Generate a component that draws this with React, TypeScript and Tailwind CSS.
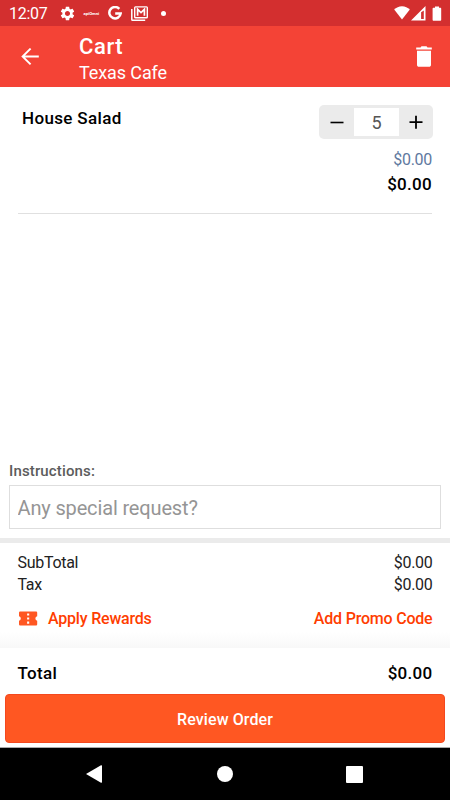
import type { ReactNode } from 'react';

interface RowProps {
  label: string;
  value: string;
}

function Icon({ className, children }: { className: string; children: ReactNode }) {
  return (
    <svg viewBox="0 0 24 24" fill="currentColor" className={`shrink-0 ${className}`}>
      {children}
    </svg>
  );
}

function SummaryRow({ label, value }: RowProps) {
  return (
    <div className="flex justify-between text-[16px] leading-[21.5px] tracking-[-0.3px] text-[#222]">
      <span>{label}</span>
      <span>{value}</span>
    </div>
  );
}

function StatusBar() {
  return (
    <div className="flex h-[26px] items-center bg-[#d32f2f] pl-[9px] pr-[8px] text-white">
      <span className="w-[49.5px] pt-[2px] text-[16px] leading-[24px] tracking-[-0.3px]">12:07</span>
      <Icon className="h-[17px] w-[17px]">
        <path d="M19.14 12.94c.04-.3.06-.61.06-.94 0-.32-.02-.64-.07-.94l2.03-1.58c.18-.14.23-.41.12-.61l-1.92-3.32c-.12-.22-.37-.29-.59-.22l-2.39.96c-.5-.38-1.03-.7-1.62-.94l-.36-2.54c-.04-.24-.24-.41-.48-.41h-3.84c-.24 0-.43.17-.47.41l-.36 2.54c-.59.24-1.13.57-1.62.94l-2.39-.96c-.22-.08-.47 0-.59.22L2.74 8.87c-.12.21-.08.47.12.61l2.03 1.58c-.05.3-.09.63-.09.94s.02.64.07.94l-2.03 1.58c-.18.14-.23.41-.12.61l1.92 3.32c.12.22.37.29.59.22l2.39-.96c.5.38 1.03.7 1.62.94l.36 2.54c.05.24.24.41.48.41h3.84c.24 0 .44-.17.47-.41l.36-2.54c.59-.24 1.13-.56 1.62-.94l2.39.96c.22.08.47 0 .59-.22l1.92-3.32c.12-.22.07-.47-.12-.61l-2.01-1.58zM12 15.6c-1.98 0-3.6-1.62-3.6-3.6s1.62-3.6 3.6-3.6 3.6 1.62 3.6 3.6-1.62 3.6-3.6 3.6z" />
      </Icon>
      <span className="ml-[8px] w-[16px] text-[4.2px] font-bold leading-[5px]">apiOmni</span>
      <svg viewBox="0 0 14 14" className="ml-[8.5px] h-[14px] w-[14px] shrink-0" fill="none" stroke="currentColor" strokeWidth="2.5">
        <path d="M11.3 2.9A5.7 5.7 0 1 0 12.7 7.4H7.2" />
      </svg>
      <svg viewBox="0 0 17 15" className="ml-[8.5px] h-[15px] w-[17px] shrink-0" fill="none" stroke="currentColor">
        <path d="M.8 3v10.4c0 .5.3.8.8.8h12.600" strokeWidth="1.5" />
        <rect x="3.7" y=".9" width="12.600" height="10.900" rx=".8" strokeWidth="1.4" />
        <path d="M6.600 9.800V3.300L10 6.500l3.400-3.200v6.500" strokeWidth="1.700" />
      </svg>
      <span className="ml-[13.5px] h-[5px] w-[5px] rounded-full bg-white" />
      <div className="ml-auto flex items-center">
        <svg viewBox="0 0 16 14" className="h-[14px] w-[16px]" fill="currentColor">
          <path d="M8 13.600.2 3.600C2.200 1.600 4.900.3 8 .3s5.800 1.300 7.800 3.300z" />
        </svg>
        <svg viewBox="0 0 15 15" className="ml-[1px] h-[15px] w-[15px]" fill="currentColor">
          <path fillRule="evenodd" d="M0 14.500 14.500 0v14.500zM10.100 6.200v6.900h2.700V4.600z" />
        </svg>
        <svg viewBox="0 0 10 15" className="ml-[6px] h-[15px] w-[10px]" fill="currentColor">
          <path d="M3 .4h4v1.300h1.200c.6 0 1 .4 1 1v11c0 .6-.4 1-1 1H1.600c-.6 0-1-.4-1-1v-11c0-.6.4-1 1-1H3z" />
        </svg>
      </div>
    </div>
  );
}

function Header() {
  return (
    <div className="flex h-[61px] bg-[#f44336] text-white">
      <svg viewBox="0 0 18 18" className="ml-[21px] mt-[22px] h-[18px] w-[18px] shrink-0" fill="none" stroke="currentColor" strokeWidth="1.9">
        <path d="M17.800 8.500H1.500M9.600.600 1.600 8.500l8 7.900" />
      </svg>
      <div className="ml-[40px] flex flex-col pt-[8px]">
        <span className="text-[22px] font-medium leading-[26px] tracking-[0.600px]">Cart</span>
        <span className="text-[18px] leading-[25px] tracking-[-0.1px]">Texas Cafe</span>
      </div>
      <svg viewBox="0 0 16 21" className="ml-auto mr-[18px] mt-[20px] h-[21px] w-[16px]" fill="currentColor">
        <path d="M.2 1.400h4.300L5.500.3h5l1 1.100h4.300v2.200H.2zM1 4.700h14v14c0 1.300-.8 2.100-2 2.100H3c-1.200 0-2-.8-2-2.100z" />
      </svg>
    </div>
  );
}

function CartItem() {
  return (
    <div className="mx-[18px] flex h-[127px] justify-between border-b border-[#e0e0e0] pt-[18px]">
      <span className="pl-[4px] text-[17px] font-medium leading-[26px] tracking-[0.35px] text-black">House Salad</span>
      <div className="flex flex-col items-end">
        <div className="-mr-px flex h-[34px] w-[114px] items-center rounded-[5px] bg-[#ebebeb] text-black">
          <button className="flex h-full w-[35px] items-center justify-center" aria-label="Decrease">
            <svg viewBox="0 0 14 14" className="h-[14px] w-[14px]" stroke="currentColor" strokeWidth="1.6">
              <path d="M.5 7.500h13" />
            </svg>
          </button>
          <span className="h-[28px] w-[45px] bg-white pt-[1px] text-center text-[18px] leading-[28px] text-[#555]">5</span>
          <button className="flex h-full w-[34px] items-center justify-center" aria-label="Increase">
            <svg viewBox="0 0 14 14" className="h-[14px] w-[14px]" stroke="currentColor" strokeWidth="1.8">
              <path d="M.5 7.200h13M7 .7v13" />
            </svg>
          </button>
        </div>
        <span className="mt-[9px] text-[16px] leading-[24px] tracking-[-0.3px] text-[#6079a0]">$0.00</span>
        <span className="text-[17px] font-medium leading-[25px] tracking-[0.3px] text-black">$0.00</span>
      </div>
    </div>
  );
}

export default function App() {
  return (
    <div className="flex h-[800px] w-[450px] flex-col overflow-hidden bg-white font-['Roboto',sans-serif]">
      <StatusBar />
      <Header />
      <CartItem />

      {/* Special instructions */}
      <div className="mt-auto px-[9px] pb-[9px]">
        <div className="text-[15px] font-medium leading-[24px] tracking-[0.15px] text-[#5c5c5c]">Instructions:</div>
        <input
          className="mt-[2px] block h-[44px] w-full border border-[#dedede] px-[7.5px] pt-[2px] text-[20px] tracking-[-0.15px] placeholder:text-[#959595]"
          placeholder="Any special request?"
        />
      </div>

      {/* Order summary */}
      <div className="h-[110px] shrink-0 border-t-[5px] border-[#ebebeb] bg-linear-to-b from-white from-85% to-[#f8f8f8] px-[17.5px] pt-[9px]">
        <SummaryRow label="SubTotal" value="$0.00" />
        <SummaryRow label="Tax" value="$0.00" />
        <div className="mt-[12px] flex items-center text-[16px] font-medium leading-[24px] tracking-[-0.2px] text-[#ff3d00]">
          <svg viewBox="0 0 20 16" className="mr-[10.5px] h-[16px] w-[20px]" fill="#ff5722">
            <path
              fillRule="evenodd"
              d="M2.500.4h15.200c1 0 1.500.5 1.500 1.300v3.500a2.300 2.300 0 0 0 0 4.500v3.600c0 .8-.5 1.300-1.500 1.300H2.500c-1 0-1.500-.5-1.500-1.300V9.700a2.300 2.300 0 0 0 0-4.500V1.700C1 .9 1.500.4 2.500.4zM9.100 2.400v2.100h2.100V2.400zM9.100 6.500v2.100h2.100V6.500zM9.100 10.600v2.100h2.100v-2.100z"
            />
          </svg>
          <span>Apply Rewards</span>
          <span className="ml-auto">Add Promo Code</span>
        </div>
      </div>

      {/* Total */}
      <div className="flex h-[46px] shrink-0 justify-between px-[17.5px] pt-[12px] text-[17px] font-medium leading-[26px] tracking-[0.3px] text-black">
        <span>Total</span>
        <span>$0.00</span>
      </div>
      <div className="h-[54px] shrink-0 border-b border-[#aaa] px-[5px]">
        <button className="h-[49px] w-full rounded-[4px] border border-[#f4481e] bg-[#ff5722] pt-[2px] text-[16px] font-medium tracking-[0.1px] text-white">
          Review Order
        </button>
      </div>

      {/* Android navigation */}
      <div className="flex h-[52px] shrink-0 items-center bg-black pl-[86px] text-white">
        <svg viewBox="0 0 16 18" className="h-[18px] w-[16px]" fill="currentColor">
          <path d="M0 9 15 .3q1-.4 1 .7v16q0 1.100-1 .7z" />
        </svg>
        <span className="ml-[115px] h-[16px] w-[16px] rounded-full bg-white" />
        <span className="ml-[113px] h-[17px] w-[17px] rounded-[1px] bg-white" />
      </div>
    </div>
  );
}
